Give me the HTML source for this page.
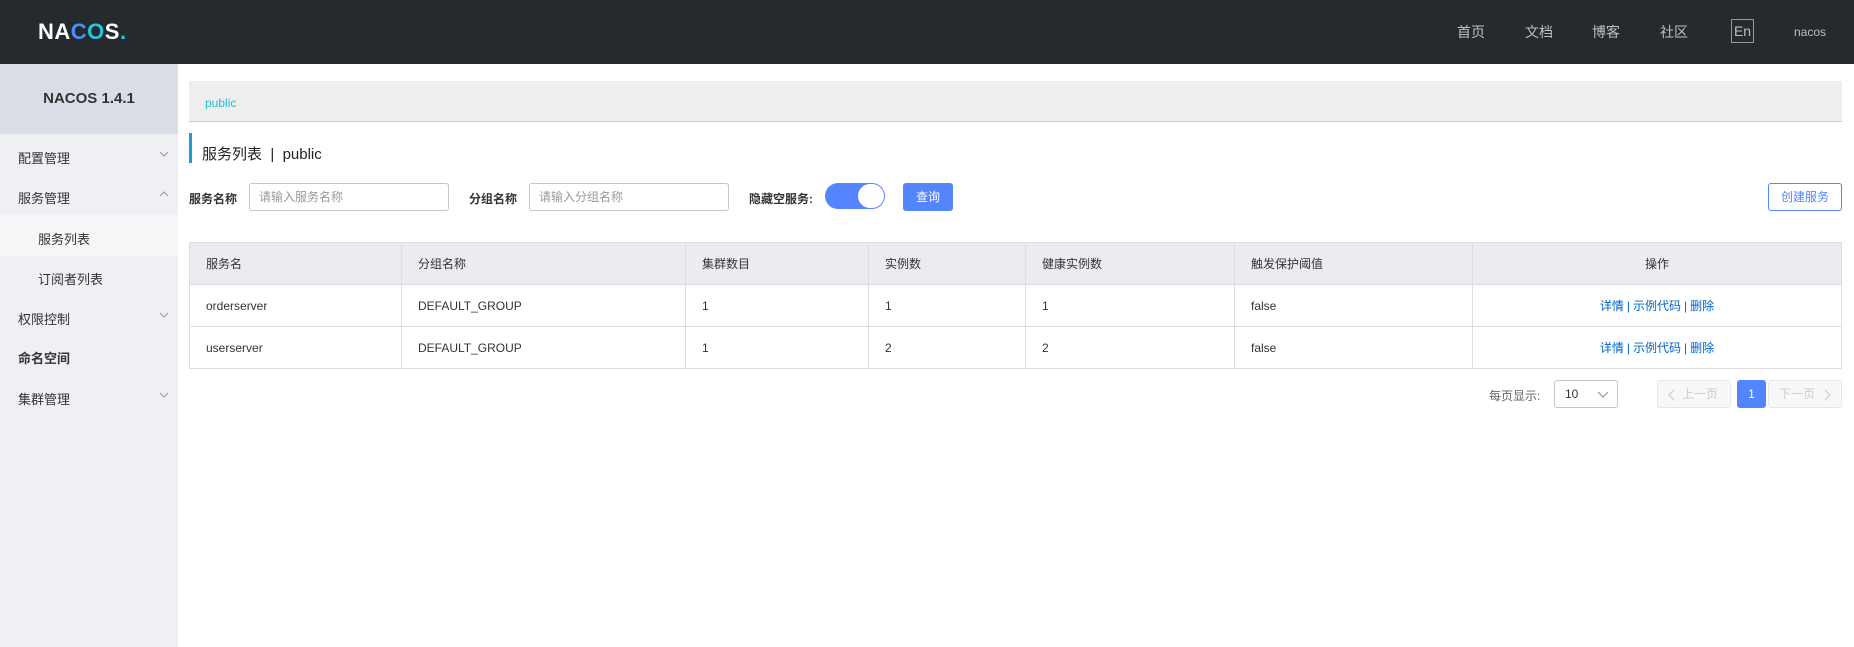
<!DOCTYPE html>
<html><head><meta charset="utf-8"><style>
*{box-sizing:border-box;margin:0;padding:0}
body{width:1854px;height:647px;overflow:hidden;background:#fff;font-family:"Liberation Sans","Noto Sans CJK SC",sans-serif;color:#333;position:relative}
.a{position:absolute}
.hdr{left:0;top:0;width:1854px;height:64px;background:#252a2f}
.nav{color:#bfbfbf;font-size:14px;top:22px}
.side{left:0;top:64px;width:178px;height:583px;background:#eef0f3}
.stitle{left:0;top:64px;width:178px;height:70px;background:#d9dde5;font-weight:bold;font-size:15px;color:#333;text-align:center;line-height:70px}
.mi{left:18px;font-size:13px;color:#333}
.chev{left:159px;width:10px;height:6px}
.inp{border:1px solid #c4c6cf;border-radius:3px;height:28px;font-size:12px;color:#999;padding:0 9px;line-height:26px}
.lbl{font-size:12px;font-weight:bold;color:#333}
table{position:absolute;left:189px;top:242px;width:1653px;border-collapse:collapse;font-size:12px;color:#333}
td{border:1px solid #dcdee3;height:42px;padding:0 16px}
tr.h td{background:#ebecf0;height:42px}
.lk{color:#0064c8}
.sep{color:#0064c8;margin:0 3px}
</style></head><body>
<div class="a hdr"></div>
<div class="a" style="left:38px;top:19px;font-size:22px;font-weight:bold;color:#fff;letter-spacing:0.5px">NA<span style="color:#4a8ff7">C</span><span style="color:#28c3e0">O</span>S<span style="color:#28c3e0">.</span></div>
<div class="a nav" style="left:1457px">首页</div>
<div class="a nav" style="left:1525px">文档</div>
<div class="a nav" style="left:1592px">博客</div>
<div class="a nav" style="left:1660px">社区</div>
<div class="a" style="left:1731px;top:19px;width:23px;height:24px;border:1px solid #999;color:#bfbfbf;font-size:14px;text-align:center;line-height:22px">En</div>
<div class="a" style="left:1794px;top:25px;color:#bfbfbf;font-size:12px">nacos</div>

<div class="a side"></div>
<div class="a stitle">NACOS 1.4.1</div>
<div class="a mi" style="top:148px">配置管理</div><svg class="a chev" style="top:151px" viewBox="0 0 10 6"><path d="M1 1L5 5L9 1" fill="none" stroke="#999" stroke-width="1"/></svg>
<div class="a mi" style="top:188px">服务管理</div><svg class="a chev" style="top:191px" viewBox="0 0 10 6"><path d="M1 5L5 1L9 5" fill="none" stroke="#999" stroke-width="1"/></svg>
<div class="a" style="left:0;top:214px;width:178px;height:42px;background:#f5f6f8"></div>
<div class="a mi" style="left:38px;top:229px">服务列表</div>
<div class="a mi" style="left:38px;top:269px">订阅者列表</div>
<div class="a mi" style="top:309px">权限控制</div><svg class="a chev" style="top:312px" viewBox="0 0 10 6"><path d="M1 1L5 5L9 1" fill="none" stroke="#999" stroke-width="1"/></svg>
<div class="a mi" style="top:348px;font-weight:bold">命名空间</div>
<div class="a mi" style="top:389px">集群管理</div><svg class="a chev" style="top:392px" viewBox="0 0 10 6"><path d="M1 1L5 5L9 1" fill="none" stroke="#999" stroke-width="1"/></svg>

<div class="a" style="left:189px;top:81px;width:1653px;height:41px;background:#eee;border-bottom:1px solid #ccc"></div>
<div class="a" style="left:205px;top:96px;font-size:12px;color:#26bad6">public</div>
<div class="a" style="left:189px;top:133px;width:3px;height:30px;background:#1f9bd1"></div>
<div class="a" style="left:202px;top:143px;font-size:15px;color:#222">服务列表 &nbsp;|&nbsp; public</div>

<div class="a lbl" style="left:189px;top:190px">服务名称</div>
<div class="a inp" style="left:249px;top:183px;width:200px">请输入服务名称</div>
<div class="a lbl" style="left:469px;top:190px">分组名称</div>
<div class="a inp" style="left:529px;top:183px;width:200px">请输入分组名称</div>
<div class="a lbl" style="left:749px;top:190px">隐藏空服务:</div>
<div class="a" style="left:825px;top:183px;width:60px;height:26px;border-radius:13px;background:#5584ff"></div>
<div class="a" style="left:858px;top:184px;width:26px;height:24px;border-radius:12px;background:#fff"></div>
<div class="a" style="left:903px;top:183px;width:50px;height:28px;border-radius:3px;background:#5584ff;color:#fff;font-size:12px;text-align:center;line-height:28px">查询</div>
<div class="a" style="left:1768px;top:183px;width:74px;height:28px;border-radius:3px;border:1px solid #5584ff;color:#5584ff;font-size:12px;text-align:center;line-height:26px">创建服务</div>

<table>
<tr class="h"><td style="width:212px">服务名</td><td style="width:284px">分组名称</td><td style="width:183px">集群数目</td><td style="width:157px">实例数</td><td style="width:209px">健康实例数</td><td style="width:238px">触发保护阈值</td><td style="text-align:center">操作</td></tr>
<tr><td>orderserver</td><td>DEFAULT_GROUP</td><td>1</td><td>1</td><td>1</td><td>false</td><td style="text-align:center"><span class="lk">详情</span><span class="sep">|</span><span class="lk">示例代码</span><span class="sep">|</span><span class="lk">删除</span></td></tr>
<tr><td>userserver</td><td>DEFAULT_GROUP</td><td>1</td><td>2</td><td>2</td><td>false</td><td style="text-align:center"><span class="lk">详情</span><span class="sep">|</span><span class="lk">示例代码</span><span class="sep">|</span><span class="lk">删除</span></td></tr>
</table>

<div class="a" style="left:1489px;top:387px;font-size:12px;color:#666">每页显示:</div>
<div class="a" style="left:1554px;top:380px;width:64px;height:28px;border:1px solid #c4c6cf;border-radius:3px;font-size:12px;line-height:26px;padding-left:10px">10<svg style="position:absolute;right:8px;top:10px" width="12" height="7" viewBox="0 0 12 7"><path d="M1 1L6 6L11 1" fill="none" stroke="#888" stroke-width="1"/></svg></div>
<div class="a" style="left:1657px;top:380px;width:74px;height:28px;border:1px solid #e6e7eb;background:#f7f8fa;border-radius:3px;font-size:12px;color:#ccc;line-height:26px;padding-left:24px"><svg style="position:absolute;left:10px;top:8px" width="7" height="12" viewBox="0 0 7 12"><path d="M6 1L1 6L6 11" fill="none" stroke="#ccc" stroke-width="1.2"/></svg>上一页</div>
<div class="a" style="left:1737px;top:380px;width:29px;height:28px;background:#5584ff;border-radius:3px;font-size:12px;color:#fff;text-align:center;line-height:28px">1</div>
<div class="a" style="left:1768px;top:380px;width:74px;height:28px;border:1px solid #e6e7eb;background:#f7f8fa;border-radius:3px;font-size:12px;color:#ccc;line-height:26px;padding-left:10px">下一页<svg style="position:absolute;right:10px;top:8px" width="7" height="12" viewBox="0 0 7 12"><path d="M1 1L6 6L1 11" fill="none" stroke="#ccc" stroke-width="1.2"/></svg></div>
</body></html>
